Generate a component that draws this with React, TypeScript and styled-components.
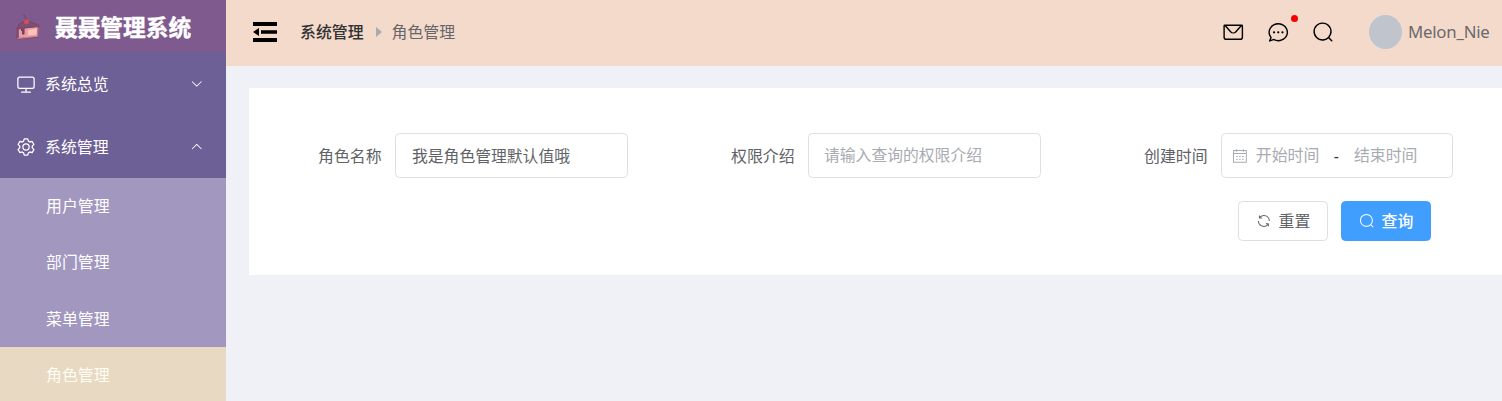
import React from 'react';
import styled, { createGlobalStyle } from 'styled-components';

const GlobalStyle = createGlobalStyle`
  *, *::before, *::after { box-sizing: border-box; }
  body {
    margin: 0;
    overflow: hidden;
    font-family: 'Noto Sans', 'Noto Sans CJK SC', sans-serif;
    font-size: 15.9px;
    color: #606266;
    background: #f0f1f6;
  }
`;

const icons = {
  monitor:
    'M544 768v128h192a32 32 0 1 1 0 64H288a32 32 0 1 1 0-64h192V768H192A128 128 0 0 1 64 640V256a128 128 0 0 1 128-128h640a128 128 0 0 1 128 128v384a128 128 0 0 1-128 128H544zM192 192a64 64 0 0 0-64 64v384a64 64 0 0 0 64 64h640a64 64 0 0 0 64-64V256a64 64 0 0 0-64-64H192z',
  setting:
    'M600.704 64a32 32 0 0 1 30.464 22.208l35.2 109.376c14.784 7.232 28.928 15.36 42.432 24.512l112.384-24.192a32 32 0 0 1 34.432 15.36L944.32 364.8a32 32 0 0 1-4.032 37.504l-77.12 85.12a357.12 357.12 0 0 1 0 49.024l77.12 85.248a32 32 0 0 1 4.032 37.504l-88.704 153.6a32 32 0 0 1-34.432 15.296L708.8 803.904c-13.44 9.088-27.648 17.28-42.368 24.512l-35.264 109.376A32 32 0 0 1 600.704 960H423.296a32 32 0 0 1-30.464-22.208L357.696 828.48a351.616 351.616 0 0 1-42.56-24.64l-112.32 24.256a32 32 0 0 1-34.432-15.36L79.68 659.2a32 32 0 0 1 4.032-37.504l77.12-85.248a357.12 357.12 0 0 1 0-48.896l-77.12-85.248A32 32 0 0 1 79.68 364.8l88.704-153.6a32 32 0 0 1 34.432-15.296l112.32 24.256c13.568-9.152 27.776-17.408 42.56-24.64l35.2-109.312A32 32 0 0 1 423.232 64H600.64zm-23.424 64H446.72l-36.352 113.088-24.512 11.968a294.113 294.113 0 0 0-34.816 20.096l-22.656 15.36-116.224-25.088-65.28 113.152 79.68 88.192-1.92 27.136a293.12 293.12 0 0 0 0 40.192l1.92 27.136-79.808 88.192 65.344 113.152 116.224-25.024 22.656 15.296a294.113 294.113 0 0 0 34.816 20.096l24.512 11.968L446.72 896h130.688l36.48-113.152 24.448-11.904a288.282 288.282 0 0 0 34.752-20.096l22.592-15.296 116.288 25.024 65.28-113.152-79.744-88.192 1.92-27.136a293.12 293.12 0 0 0 0-40.256l-1.92-27.136 79.808-88.128-65.344-113.152-116.288 24.96-22.592-15.232a287.616 287.616 0 0 0-34.752-20.096l-24.448-11.904L577.344 128zM512 320a192 192 0 1 1 0 384 192 192 0 0 1 0-384zm0 64a128 128 0 1 0 0 256 128 128 0 0 0 0-256z',
  arrowDown:
    'M831.872 340.864 512 652.672 192.128 340.864a30.592 30.592 0 0 0-42.752 0 29.12 29.12 0 0 0 0 41.6L489.664 714.24a32 32 0 0 0 44.672 0l340.288-331.712a29.12 29.12 0 0 0 0-41.728 30.592 30.592 0 0 0-42.752 0z',
  arrowUp:
    'M831.872 683.136 512 371.328 192.128 683.136a30.592 30.592 0 0 1-42.752 0 29.12 29.12 0 0 1 0-41.6L489.664 309.76a32 32 0 0 1 44.672 0l340.288 331.712a29.12 29.12 0 0 1 0 41.728 30.592 30.592 0 0 1-42.752 0z',
  caretRight: 'M384 192v640l384-320.064z',
  message:
    'M128 224v512a64 64 0 0 0 64 64h640a64 64 0 0 0 64-64V224H128zm0-64h768a64 64 0 0 1 64 64v512a128 128 0 0 1-128 128H192A128 128 0 0 1 64 736V224a64 64 0 0 1 64-64zM904 224 656.512 506.88a192 192 0 0 1-289.024 0L120 224h784zm-698.944 0 210.56 240.704a128 128 0 0 0 192.704 0L818.944 224H205.056z',
  chat:
    'm174.72 855.68 135.296-45.12 23.68 11.84C388.096 849.536 448.576 864 512 864c211.84 0 384-166.784 384-352S723.84 160 512 160 128 326.784 128 512c0 69.12 24.96 139.264 70.848 199.232l22.08 28.8-46.272 115.584zm-45.248 82.56A32 32 0 0 1 89.6 896l58.368-145.92C94.72 680.32 64 596.864 64 512 64 299.904 256 96 512 96s448 203.904 448 416-192 416-448 416a461.056 461.056 0 0 1-206.912-48.384l-175.616 58.56zM512 563.2a51.2 51.2 0 1 1 0-102.4 51.2 51.2 0 0 1 0 102.4zm192 0a51.2 51.2 0 1 1 0-102.4 51.2 51.2 0 0 1 0 102.4zm-384 0a51.2 51.2 0 1 1 0-102.4 51.2 51.2 0 0 1 0 102.4z',
  search:
    'm795.904 750.72 124.992 124.928a32 32 0 0 1-45.248 45.248L750.656 795.904a416 416 0 1 1 45.248-45.248zM480 832a352 352 0 1 0 0-704 352 352 0 0 0 0 704z',
  calendar:
    'M128 384v512h768V192H768v32a32 32 0 1 1-64 0v-32H320v32a32 32 0 0 1-64 0v-32H128v128h768v64H128zm192-256h384V96a32 32 0 1 1 64 0v32h160a32 32 0 0 1 32 32v768a32 32 0 0 1-32 32H96a32 32 0 0 1-32-32V160a32 32 0 0 1 32-32h160V96a32 32 0 0 1 64 0v32zm-32 384h64a32 32 0 0 1 0 64h-64a32 32 0 0 1 0-64zm0 192h64a32 32 0 1 1 0 64h-64a32 32 0 1 1 0-64zm192-192h64a32 32 0 0 1 0 64h-64a32 32 0 0 1 0-64zm0 192h64a32 32 0 1 1 0 64h-64a32 32 0 1 1 0-64zm192-192h64a32 32 0 1 1 0 64h-64a32 32 0 1 1 0-64zm0 192h64a32 32 0 1 1 0 64h-64a32 32 0 1 1 0-64z',
  refresh:
    'M771.776 794.88A384 384 0 0 1 128 512h64a320 320 0 0 0 555.712 216.448H654.72a32 32 0 1 1 0-64h149.056a32 32 0 0 1 32 32v148.928a32 32 0 1 1-64 0v-50.56zM276.288 295.616h92.992a32 32 0 0 1 0 64H220.16a32 32 0 0 1-32-32V178.56a32 32 0 0 1 64 0v50.56A384 384 0 0 1 896.128 512h-64a320 320 0 0 0-555.776-216.384z',
};

const IconSvg = styled.svg<{ $size: number }>`
  display: block;
  flex: none;
  width: ${(p) => p.$size}px;
  height: ${(p) => p.$size}px;
  fill: currentColor;
`;

const Icon = ({ name, size }: { name: keyof typeof icons; size: number }) => (
  <IconSvg $size={size} viewBox="0 0 1024 1024" aria-hidden="true">
    <path d={icons[name]} />
  </IconSvg>
);

const Layout = styled.div`
  display: flex;
  height: 401px;
  overflow: hidden;
  white-space: nowrap;
`;

const Sidebar = styled.aside`
  flex: none;
  width: 226px;
  background: #6d6096;
  color: #fff;
`;

const Brand = styled.div`
  display: flex;
  align-items: center;
  height: 52px;
  padding: 3px 0 0 14px;
  background: #7f5a8f;
`;

const BrandLogo = styled.svg`
  flex: none;
  width: 28px;
  height: 28px;
`;

const BrandName = styled.h1`
  margin: 1px 0 0 13px;
  font-size: 22.7px;
  line-height: 30px;
  font-weight: 700;
  -webkit-text-stroke: 0.4px currentColor;
`;

const MenuTitle = styled.div`
  display: flex;
  align-items: center;
  height: 63px;
  padding: 0 23px 0 16px;
`;

const MenuLabel = styled.span`
  flex: 1;
  margin-left: 9px;
`;

const SubMenu = styled.ul`
  margin: 0;
  padding: 0;
  list-style: none;
  background: #a297bf;
`;

const SubMenuItem = styled.li<{ $active?: boolean }>`
  display: flex;
  align-items: center;
  height: 56.3px;
  padding: 0 0 1.4px 46px;
  color: ${(p) => (p.$active ? '#fffdf4' : '#fff')};
  background: ${(p) => (p.$active ? '#e7d9c2' : 'transparent')};
`;

const Main = styled.main`
  flex: 1;
  min-width: 0;
`;

const Header = styled.header`
  display: flex;
  align-items: center;
  height: 66px;
  padding: 0 13px 2px 26px;
  background: #f3dacb;
`;

const FoldIcon = styled.svg`
  flex: none;
  width: 26px;
  height: 22px;
`;

const Breadcrumb = styled.nav`
  display: flex;
  flex: 1;
  align-items: center;
  margin: 0 0 1px 22px;
`;

const Crumb = styled.span<{ $root?: boolean }>`
  color: ${(p) => (p.$root ? '#303133' : '#66666a')};
  font-weight: ${(p) => (p.$root ? 500 : 400)};
`;

const Separator = styled.span`
  margin: 0 6px;
  color: #a8abb2;
`;

const Actions = styled.div`
  display: flex;
  gap: 22.5px;
  color: #000;
`;

const Action = styled.span`
  position: relative;
`;

const Dot = styled.i`
  position: absolute;
  top: -6px;
  right: -9px;
  width: 7px;
  height: 7px;
  border-radius: 50%;
  background: #f50000;
`;

const Avatar = styled.span`
  width: 33px;
  height: 34px;
  margin-left: 35px;
  border-radius: 50%;
  background: #c0c4cc;
`;

const UserName = styled.span`
  width: 81px;
  margin: 0 0 1px 6px;
  font-size: 16.8px;
  letter-spacing: -0.22px;
  color: #6b696b;
`;

const SearchCard = styled.form`
  height: 187px;
  margin: 22px 0 0 23px;
  padding: 45px 49px 0 69px;
  background: #fff;
`;

const Fields = styled.div`
  display: flex;
  justify-content: space-between;
`;

const Field = styled.label`
  display: flex;
  align-items: center;
`;

const FieldLabel = styled.span`
  width: 64px;
  margin-right: 13px;
`;

const Input = styled.input`
  width: 233px;
  height: 45px;
  padding: 0 16px;
  border: 1px solid #dcdfe6;
  border-radius: 4.5px;
  outline: none;
  font: inherit;
  font-size: 15.8px;
  color: #606266;
  &::placeholder { color: #a8abb2; }
`;

const PlaceholderInput = styled(Input)`
  padding: 0 15px 2px;
`;

const DateRange = styled.div`
  display: flex;
  align-items: center;
  width: 232px;
  height: 45px;
  padding: 0 10px;
  border: 1px solid #dcdfe6;
  border-radius: 4.5px;
  color: #a8abb2;
`;

const DateText = styled.span`
  width: 64px;
  margin: 0 0 2px 8px;
`;

const Dash = styled.span`
  margin: 0 7px 0 14px;
  color: #303133;
`;

const Buttons = styled.div`
  display: flex;
  justify-content: flex-end;
  gap: 13px;
  margin: 23px 22px 0 0;
`;

const Button = styled.button<{ $primary?: boolean }>`
  display: flex;
  align-items: center;
  justify-content: center;
  gap: 7px;
  width: 90px;
  height: 40px;
  padding: 0;
  border: 1px solid ${(p) => (p.$primary ? '#409eff' : '#dcdfe6')};
  border-radius: 4.5px;
  background: ${(p) => (p.$primary ? '#409eff' : '#fff')};
  color: ${(p) => (p.$primary ? '#fff' : '#606266')};
  font: inherit;
  font-weight: ${(p) => (p.$primary ? 500 : 400)};
`;

const ButtonText = styled.span`
  margin-bottom: 2px;
`;

const subItems = ['用户管理', '部门管理', '菜单管理', '角色管理'];

export default function App() {
  return (
    <>
      <GlobalStyle />
      <Layout>
        <Sidebar>
          <Brand>
            <BrandLogo viewBox="0 0 28 28">
              <path d="M3 14.500 5 10l7-3.500 11 4 1 2L10 14.500z" fill="#7a4f78" />
              <path d="M5 15.500 24 12.500l-1 10L5 24z" fill="#e79fa3" />
              <path d="M14 16 23 14.500l-.5 6L14 21.500z" fill="#fac4bd" />
              <path
                d="M3 25V14.500Q5 9 10 7.500M3 14.500 24.500 12.500V11L15 7M3 25l20.500-2 1-10"
                fill="none"
                stroke="#84445b"
                strokeWidth="1.1"
              />
              <path d="M3.500 24.500 23.500 22.300l.7-8.500" fill="none" stroke="#d58289" />
              <path d="M7 14.500h3.600V20q-1.500 1.300-2.600 0v-3H7z" fill="#7b4060" />
              <path d="M12 7Q12 2.500 9.500 .8" fill="none" stroke="#84445b" strokeWidth="1.2" />
              <circle cx="12.500" cy="8" r="2.400" fill="#d84c57" />
            </BrandLogo>
            <BrandName>聂聂管理系统</BrandName>
          </Brand>
          <MenuTitle>
            <Icon name="monitor" size={20} />
            <MenuLabel>系统总览</MenuLabel>
            <Icon name="arrowDown" size={13.5} />
          </MenuTitle>
          <MenuTitle>
            <Icon name="setting" size={20} />
            <MenuLabel>系统管理</MenuLabel>
            <Icon name="arrowUp" size={13.5} />
          </MenuTitle>
          <SubMenu>
            {subItems.map((item) => (
              <SubMenuItem key={item} $active={item === '角色管理'}>
                {item}
              </SubMenuItem>
            ))}
          </SubMenu>
        </Sidebar>
        <Main>
          <Header>
            <FoldIcon viewBox="0 0 26 22">
              <path d="M1 1h24v4H1zM9 9.300h16v3.500H9zM1 17h24v4H1zM1 11l6-4v8z" />
            </FoldIcon>
            <Breadcrumb>
              <Crumb $root>系统管理</Crumb>
              <Separator>
                <Icon name="caretRight" size={16} />
              </Separator>
              <Crumb>角色管理</Crumb>
            </Breadcrumb>
            <Actions>
              <Action>
                <Icon name="message" size={22.5} />
              </Action>
              <Action>
                <Icon name="chat" size={22.5} />
                <Dot />
              </Action>
              <Action>
                <Icon name="search" size={22.5} />
              </Action>
            </Actions>
            <Avatar />
            <UserName>Melon_Nie</UserName>
          </Header>
          <SearchCard>
            <Fields>
              <Field>
                <FieldLabel>角色名称</FieldLabel>
                <Input defaultValue="我是角色管理默认值哦" />
              </Field>
              <Field>
                <FieldLabel>权限介绍</FieldLabel>
                <PlaceholderInput placeholder="请输入查询的权限介绍" />
              </Field>
              <Field>
                <FieldLabel>创建时间</FieldLabel>
                <DateRange>
                  <Icon name="calendar" size={15.8} />
                  <DateText>开始时间</DateText>
                  <Dash>-</Dash>
                  <DateText>结束时间</DateText>
                </DateRange>
              </Field>
            </Fields>
            <Buttons>
              <Button type="button">
                <Icon name="refresh" size={15.8} />
                <ButtonText>重置</ButtonText>
              </Button>
              <Button type="button" $primary>
                <Icon name="search" size={15.8} />
                <ButtonText>查询</ButtonText>
              </Button>
            </Buttons>
          </SearchCard>
        </Main>
      </Layout>
    </>
  );
}
